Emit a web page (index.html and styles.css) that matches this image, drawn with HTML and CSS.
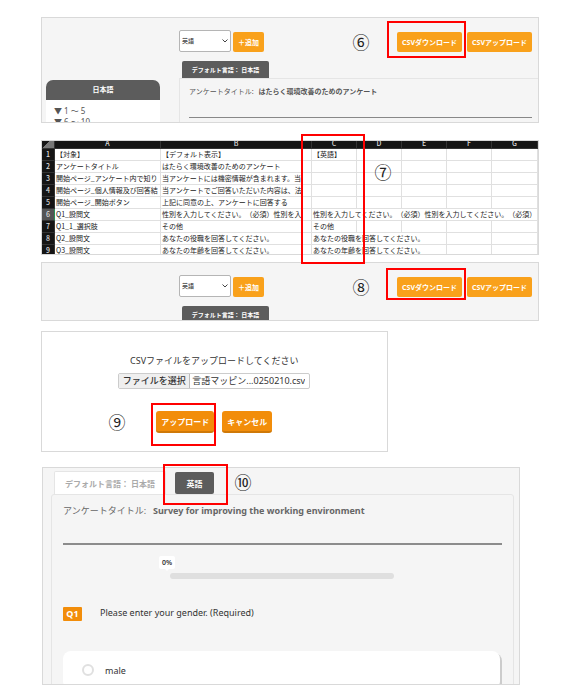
FILE: index.html
```html
<!DOCTYPE html>
<html lang="ja">
<head>
<meta charset="utf-8">
<meta name="viewport" content="width=device-width, initial-scale=1">
<title>アンケート言語設定</title>
<link rel="stylesheet" href="styles.css">
</head>
<body>
<main class="steps">

  <section class="step step-download">
    <div class="panel panel-editor">
      <aside class="sidebar">
        <h2 class="sidebar-title">日本語</h2>
        <ul class="sidebar-list">
          <li>▼ 1 ～ 5</li>
          <li>▼ 6 ～ 10</li>
        </ul>
      </aside>
      <div class="editor">
        <div class="toolbar">
          <select class="language" aria-label="言語"><option>英語</option></select>
          <button class="btn btn-add" type="button">＋追加</button>
          <div class="csv-actions">
            <button class="btn" type="button">CSVダウンロード</button>
            <button class="btn" type="button">CSVアップロード</button>
          </div>
        </div>
        <button class="tab tab-small" type="button">デフォルト言語： 日本語</button>
        <div class="sheet-box">
          <p class="survey-title">アンケートタイトル:<b>はたらく環境改善のためのアンケート</b></p>
        </div>
      </div>
    </div>
    <span class="mark mark-6">⑥</span>
    <span class="frame frame-6"></span>
  </section>

  <section class="step step-table">
    <div class="panel panel-table">
      <table class="grid">
        <colgroup><col class="col-num"><col class="col-a"><col class="col-b"><col class="col-n"><col class="col-n"><col class="col-n"><col class="col-n"><col></colgroup>
        <thead>
          <tr><th class="corner"></th><th>A</th><th>B</th><th>C</th><th>D</th><th>E</th><th>F</th><th>G</th></tr>
        </thead>
        <tbody>
          <tr><th>1</th><td>【対象】</td><td>【デフォルト表示】</td><td>【英語】</td><td></td><td></td><td></td><td></td></tr>
          <tr><th>2</th><td>アンケートタイトル</td><td>はたらく環境改善のためのアンケート</td><td></td><td></td><td></td><td></td><td></td></tr>
          <tr><th>3</th><td>開始ページ_アンケート内で知り</td><td>当アンケートには機密情報が含まれます。当</td><td></td><td></td><td></td><td></td><td></td></tr>
          <tr><th>4</th><td>開始ページ_個人情報及び回答結</td><td>当アンケートでご回答いただいた内容は、法</td><td></td><td></td><td></td><td></td><td></td></tr>
          <tr><th>5</th><td>開始ページ_開始ボタン</td><td>上記に同意の上、アンケートに回答する</td><td></td><td></td><td></td><td></td><td></td></tr>
          <tr><th class="current">6</th><td>Q1_設問文</td><td>性別を入力してください。（必須）性別を入</td><td colspan="5">性別を入力してください。（必須）性別を入力してください。（必須）</td></tr>
          <tr><th>7</th><td>Q1_1_選択肢</td><td>その他</td><td>その他</td><td></td><td></td><td></td><td></td></tr>
          <tr><th>8</th><td>Q2_設問文</td><td>あなたの役職を回答してください。</td><td colspan="3">あなたの役職を回答してください。</td><td></td><td></td></tr>
          <tr><th>9</th><td>Q3_設問文</td><td>あなたの年齢を回答してください。</td><td colspan="3">あなたの年齢を回答してください。</td><td></td><td></td></tr>
        </tbody>
      </table>
    </div>
    <span class="mark mark-7">⑦</span>
    <span class="frame frame-7"></span>
  </section>

  <section class="step step-again">
    <div class="panel panel-editor panel-short">
      <div class="editor">
        <div class="toolbar">
          <select class="language" aria-label="言語"><option>英語</option></select>
          <button class="btn btn-add" type="button">＋追加</button>
          <div class="csv-actions">
            <button class="btn" type="button">CSVダウンロード</button>
            <button class="btn" type="button">CSVアップロード</button>
          </div>
        </div>
        <button class="tab tab-small" type="button">デフォルト言語： 日本語</button>
      </div>
    </div>
    <span class="mark mark-8">⑧</span>
    <span class="frame frame-8"></span>
  </section>

  <section class="step step-upload">
    <form class="panel panel-upload">
      <p class="upload-text">CSVファイルをアップロードしてください</p>
      <div class="file">
        <input class="file-input" type="file" id="csv" accept=".csv">
        <label class="file-button" for="csv">ファイルを選択</label>
        <span class="file-name">言語マッピン...0250210.csv</span>
      </div>
      <div class="upload-actions">
        <button class="btn-raised btn-send" type="button">アップロード</button>
        <button class="btn-raised" type="button">キャンセル</button>
      </div>
    </form>
    <span class="mark mark-9">⑨</span>
    <span class="frame frame-9"></span>
  </section>

  <section class="step step-result">
    <div class="panel panel-result">
      <div class="tabs">
        <button class="tab tab-idle" type="button">デフォルト言語： 日本語</button>
        <button class="tab tab-active" type="button">英語</button>
      </div>
      <div class="result">
        <p class="result-title">アンケートタイトル:<b>Survey for improving the working environment</b></p>
        <div class="progress">
          <span class="progress-label">0%</span>
          <div class="progress-track"></div>
        </div>
        <div class="question">
          <span class="question-number">Q1</span>
          <p class="question-text">Please enter your gender. (Required)</p>
        </div>
        <label class="answer"><input class="radio" type="radio" name="gender">male</label>
      </div>
    </div>
    <span class="mark mark-10">⑩</span>
    <span class="frame frame-10"></span>
  </section>

</main>
</body>
</html>
```
FILE: styles.css
```css
* { box-sizing: border-box; }

body {
  margin: 0;
  background: #fff;
  color: #444;
  font-family: "Noto Sans", "Noto Sans CJK JP", sans-serif;
  font-size: 7px;
}

p, h2, ul { margin: 0; padding: 0; }
button, select, input { margin: 0; font-family: inherit; }

.steps {
  display: flex;
  flex-direction: column;
  padding: 17px 37px 5px 41px;
}

.step { position: relative; }
.step-table { margin-top: 17px; }
.step-again { margin-top: 7px; }
.step-upload { width: 70%; margin-top: 10px; padding-right: 2px; }
.step-result { width: 96%; margin: 15px 0 0 1px; }

.panel {
  border: 1px solid #d9d9d9;
  background: #f5f5f5;
  overflow: hidden;
}

/* numbered callouts */
.mark {
  position: absolute;
  width: 18px;
  color: #222;
  font: 400 17px/18px "Noto Sans CJK JP", sans-serif;
  text-align: center;
}
.frame {
  position: absolute;
  z-index: 1;
  border: 2px solid #f00;
  pointer-events: none;
}
.mark-6 { right: 169px; top: 16px; }
.frame-6 { right: 73px; top: 4px; width: 79px; height: 37px; }
.mark-7 { left: 333px; top: 23px; }
.frame-7 { left: 260px; top: -6px; width: 64px; height: 130px; }
.mark-8 { right: 169px; top: 16px; }
.frame-8 { right: 73px; top: 6px; width: 80px; height: 32px; }
.mark-9 { left: 67px; top: 82px; }
.frame-9 { left: 110px; top: 72px; width: 65px; height: 43px; }
.mark-10 { left: 192px; top: 6px; }
.frame-10 { left: 121px; top: -3px; width: 65px; height: 41px; }

/* language editor */
.panel-editor {
  display: flex;
  height: 106px;
  padding-left: 4px;
}
.panel-short { height: 59px; }
.sidebar { width: 114px; padding-top: 62px; }
.sidebar-title {
  height: 20px;
  border-radius: 7px 7px 0 0;
  background: #5c5c5c;
  color: #fff;
  font-size: 7px;
  line-height: 20px;
  text-align: center;
}
.sidebar-list {
  padding: 5px 8px;
  background: #fff;
  color: #555;
  font-size: 8px;
  line-height: 11px;
  list-style: none;
}
.editor {
  flex: 1;
  margin-left: 19px;
  padding-top: 12px;
}
.panel-short .editor { margin-left: 133px; }
.toolbar {
  display: flex;
  align-items: flex-end;
  gap: 2px;
  padding-right: 6px;
}
.language {
  width: 52px;
  height: 22px;
  padding: 0 2px;
  border: 1px solid #b5b5b5;
  border-radius: 2px;
  background: #fff url("data:image/svg+xml,%3Csvg xmlns='http://www.w3.org/2000/svg' width='6' height='4' fill='none' stroke='%23444'%3E%3Cpath d='M.5.5 3 3 5.5.5'/%3E%3C/svg%3E") no-repeat right 2px center;
  color: #222;
  font-size: 6px;
  appearance: none;
}
.btn {
  height: 20px;
  padding: 0;
  width: 65px;
  border: 0;
  border-radius: 2px;
  background: #f9a11b;
  color: #fff;
  font-size: 7px;
  font-weight: 700;
  white-space: nowrap;
}
.btn-add { width: 31px; }
.csv-actions { display: flex; gap: 5px; margin-left: auto; }

.tab {
  display: block;
  padding: 0;
  border: 0;
  border-radius: 2px 2px 0 0;
  background: #5c5c5c;
  color: #fff;
  font-weight: 700;
  white-space: nowrap;
}
.tab-small { width: 87px; height: 17px; margin: 9px 0 0 3px; font-size: 6px; }
.sheet-box {
  height: 60px;
  padding: 0 6px 0 9px;
  border: solid #e5e5e5;
  border-width: 1px 0 0 1px;
}
.survey-title {
  height: 39px;
  border-bottom: 1px solid #888;
  color: #555;
  font-size: 7px;
  line-height: 25px;
  white-space: nowrap;
}
.survey-title b { margin-left: 5px; }

/* spreadsheet */
.panel-table { height: 115px; background: #fff; }
.grid {
  width: 100%;
  margin-top: -3px;
  border-collapse: separate;
  border-spacing: 0;
  table-layout: fixed;
  color: #222;
  font-family: "Noto Sans CJK JP", sans-serif;
  font-size: 7px;
  line-height: 11px;
  text-spacing-trim: space-all;
}
.col-num { width: 13px; }
.col-a { width: 106px; }
.col-b { width: 151px; }
.col-n { width: 45px; }
.grid td, .grid th {
  height: 12px;
  padding: 0 0 0 1px;
  border: solid #e0e0e0;
  border-width: 0 1px 1px 0;
  overflow: hidden;
  white-space: nowrap;
}
.grid thead th { height: 11px; line-height: 10px; }
.grid th {
  padding: 0;
  border-color: #333;
  background: #151515;
  color: #ddd;
  font-weight: 500;
}
.grid .current { background: #555; border-right-color: #2a9155; }
.grid .corner { background: linear-gradient(135deg, #151515 50%, #777 50%); }

/* upload dialog */
.panel-upload {
  display: flex;
  flex-direction: column;
  align-items: center;
  height: 121px;
  padding-top: 22px;
  background: #fff;
  color: #333;
  font-size: 9px;
}
.upload-text { line-height: 14px; white-space: nowrap; }
.file {
  position: relative;
  display: flex;
  width: 192px;
  height: 16px;
  margin-top: 5px;
  border: 1px solid #ccc;
  border-radius: 2px;
  line-height: 14px;
  white-space: nowrap;
}
.file-input { position: absolute; inset: 0; width: 100%; opacity: 0; }
.file-button {
  width: 71px;
  border-right: 1px solid #bbb;
  background: #efefef;
  font-weight: 500;
  text-align: center;
}
.file-name { padding-left: 2px; overflow: hidden; }
.upload-actions { display: flex; gap: 8px; margin: 22px 0 0 0; }
.btn-raised {
  width: 50px;
  height: 22px;
  padding: 0;
  border: 0;
  border-bottom: 2px solid #cf7908;
  border-radius: 3px;
  background: #f28d0a;
  color: #fff;
  font-size: 8px;
  font-weight: 700;
}
.btn-send { width: 58px; }

/* translated survey */
.panel-result { height: 218px; padding: 3px 5px 0 8px; }
.tabs { display: flex; align-items: flex-end; gap: 9px; padding-left: 3px; }
.tab-idle {
  width: 112px;
  height: 23px;
  border: 1px solid #e5e5e5;
  border-bottom: 0;
  background: #fff;
  color: #aaa;
  font-size: 8px;
}
.tab-active { width: 39px; height: 22px; border-radius: 2px; font-size: 8px; }
.result {
  height: 200px;
  padding: 0 11px;
  border: 1px solid #e5e5e5;
  border-radius: 3px;
}
.result-title {
  height: 50px;
  border-bottom: 2px solid #8c8c8c;
  color: #666;
  font-size: 9px;
  line-height: 32px;
  white-space: nowrap;
}
.result-title b { margin-left: 7px; }
.progress { width: 51%; margin: 11px 0 0 107px; }
.progress-label {
  position: relative;
  display: block;
  width: 16px;
  height: 13px;
  margin-left: -11px;
  border-radius: 2px;
  background: #fff;
  color: #333;
  font-size: 7px;
  font-weight: 600;
  line-height: 13px;
  text-align: center;
}
.progress-label::after {
  content: "";
  position: absolute;
  left: 6px;
  top: 13px;
  border: 2px solid transparent;
  border-top-color: #fff;
}
.progress-track { height: 6px; margin-top: 4px; border-radius: 3px; background: #dfdfdf; }
.question { display: flex; gap: 18px; margin-top: 28px; }
.question-number {
  width: 19px;
  height: 14px;
  border-radius: 1px;
  background: #f28d0a;
  color: #fff;
  font-size: 9px;
  font-weight: 700;
  line-height: 14px;
  text-align: center;
}
.question-text { color: #333; font-size: 9px; line-height: 12px; }
.answer {
  display: flex;
  align-items: center;
  gap: 11px;
  height: 38px;
  margin: 30px 2px 0 0;
  padding-left: 19px;
  border-radius: 8px;
  background: #fff;
  box-shadow: 2px 2px 0 #ccc;
  color: #333;
  font-size: 9px;
}
.radio {
  width: 12px;
  height: 12px;
  border: 2px solid #e0e0e0;
  border-radius: 50%;
  background: #fff;
  appearance: none;
}
```
